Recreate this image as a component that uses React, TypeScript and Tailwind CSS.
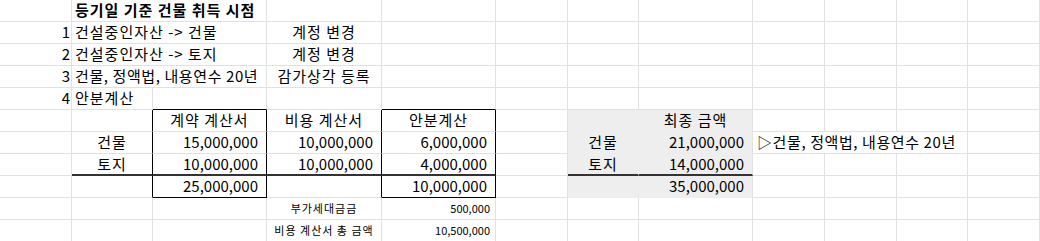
import React from "react";
import { twMerge } from "tailwind-merge";

// one spreadsheet cell, gridline on right + bottom
const Cell = ({ children, className = "" }: { children?: React.ReactNode; className?: string }) => (
  <div
    className={twMerge(
      "flex items-center overflow-hidden whitespace-nowrap px-[3px] border-r border-b border-r-[#e1e1e1] border-b-[#e1e1e1] bg-white",
      className
    )}
  >
    {children}
  </div>
);

const Empty = ({ n }: { n: number }) => (
  <>
    {Array.from({ length: n }).map((_, i) => (
      <Cell key={i} />
    ))}
  </>
);

const num = "justify-end pr-[8px]";
const kr = "tracking-[1px]";
const mixed = "tracking-[0.6px]";
const small = "text-[11px] tracking-[1px]";
const gray = "bg-[#eeeeee] border-b-[#eeeeee]";

const App = () => {
  return (
    <div
      className="grid h-[241px] w-[1040px] overflow-hidden bg-white text-[15px] text-black grid-cols-[72px_81px_114px_115px_114px_72px_71px_114px_72px_72px_71px_72px] grid-rows-[repeat(11,22px)]"
      style={{ fontFamily: '"Noto Sans CJK KR", "Noto Sans", sans-serif' }}
    >
      {/* row 1 - title */}
      <Cell />
      <Cell className={twMerge(kr, "col-span-2 font-bold")}>등기일 기준 건물 취득 시점</Cell>
      <Empty n={9} />

      {/* rows 2-4 - steps */}
      <Cell className="justify-end pr-[1px]">1</Cell>
      <Cell className={twMerge(kr, "col-span-2")}>건설중인자산 -&gt; 건물</Cell>
      <Cell className={twMerge(kr, "justify-center")}>계정 변경</Cell>
      <Empty n={8} />

      <Cell className="justify-end pr-[1px]">2</Cell>
      <Cell className={twMerge(kr, "col-span-2")}>건설중인자산 -&gt; 토지</Cell>
      <Cell className={twMerge(kr, "justify-center")}>계정 변경</Cell>
      <Empty n={8} />

      <Cell className="justify-end pr-[1px]">3</Cell>
      <Cell className={twMerge(mixed, "col-span-2")}>건물, 정액법, 내용연수 20년</Cell>
      <Cell className={twMerge(kr, "justify-center")}>감가상각 등록</Cell>
      <Empty n={8} />

      <Cell className="justify-end pr-[1px]">4</Cell>
      <Cell className={kr}>안분계산</Cell>
      <Cell className="border-b-black" />
      <Cell />
      <Cell className="border-b-black" />
      <Empty n={7} />

      {/* allocation table header */}
      <Cell />
      <Cell className="border-r-black" />
      <Cell className={twMerge(kr, "justify-center border-r-black")}>계약 계산서</Cell>
      <Cell className={twMerge(kr, "justify-center border-r-black")}>비용 계산서</Cell>
      <Cell className={twMerge(kr, "justify-center border-r-black")}>안분계산</Cell>
      <Cell />
      <Cell className={twMerge(gray, "border-r-[#eeeeee]")} />
      <Cell className={twMerge(gray, kr, "justify-center")}>최종 금액</Cell>
      <Empty n={4} />

      {/* 건물 */}
      <Cell />
      <Cell className={twMerge(kr, "justify-center border-r-black")}>건물</Cell>
      <Cell className={twMerge(num, "border-r-black")}>15,000,000</Cell>
      <Cell className={twMerge(num, "border-r-black")}>10,000,000</Cell>
      <Cell className={twMerge(num, "border-r-black")}>6,000,000</Cell>
      <Cell />
      <Cell className={twMerge(gray, kr, "justify-center border-r-[#eeeeee]")}>건물</Cell>
      <Cell className={twMerge(gray, num)}>21,000,000</Cell>
      <Cell className={twMerge(mixed, "col-span-3 pl-[4px]")}>▷건물, 정액법, 내용연수 20년</Cell>
      <Cell />

      {/* 토지 */}
      <Cell />
      <Cell className={twMerge(kr, "justify-center border-r-black border-b-2 border-b-[#333]")}>토지</Cell>
      <Cell className={twMerge(num, "border-r-black border-b-2 border-b-[#333]")}>10,000,000</Cell>
      <Cell className={twMerge(num, "border-r-black border-b-2 border-b-[#333]")}>10,000,000</Cell>
      <Cell className={twMerge(num, "border-r-black border-b-2 border-b-[#333]")}>4,000,000</Cell>
      <Cell />
      <Cell className={twMerge(gray, kr, "justify-center border-r-[#eeeeee] border-b-2 border-b-[#333]")}>토지</Cell>
      <Cell className={twMerge(gray, num, "border-b-2 border-b-[#333]")}>14,000,000</Cell>
      <Empty n={4} />

      {/* totals */}
      <Cell />
      <Cell className="border-r-black" />
      <Cell className={twMerge(num, "border-r-black border-b-black")}>25,000,000</Cell>
      <Cell className="border-r-black" />
      <Cell className={twMerge(num, "border-r-black border-b-black")}>10,000,000</Cell>
      <Cell />
      <Cell className={twMerge(gray, "border-r-[#eeeeee]")} />
      <Cell className={twMerge(gray, num)}>35,000,000</Cell>
      <Empty n={4} />

      {/* VAT notes */}
      <Empty n={3} />
      <Cell className={twMerge(small, "justify-center")}>부가세대금금</Cell>
      <Cell className="text-[11px] justify-end pr-[5px]">500,000</Cell>
      <Empty n={7} />

      <Empty n={3} />
      <Cell className={twMerge(small, "justify-center")}>비용 계산서 총 금액</Cell>
      <Cell className="text-[11px] justify-end pr-[5px]">10,500,000</Cell>
      <Empty n={7} />
    </div>
  );
};

export default App;
